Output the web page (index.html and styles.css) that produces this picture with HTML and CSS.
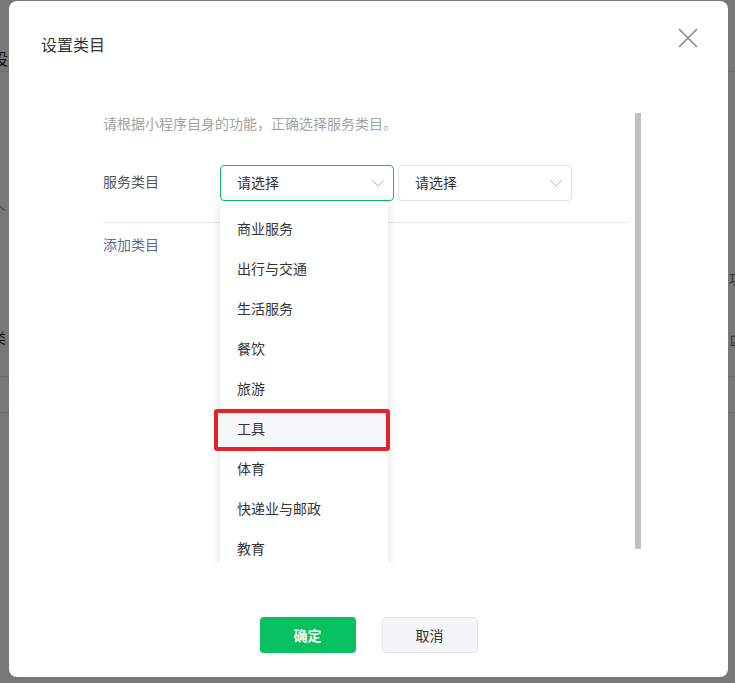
FILE: index.html
```html
<!DOCTYPE html>
<html lang="zh-CN">
<head>
<meta charset="utf-8">
<title>设置类目</title>
<link rel="stylesheet" href="styles.css">
</head>
<body>
<div class="page">
  <div class="bg-head"><span class="bg-title">设置</span></div>
  <div class="bg-row">
    <div class="bg-left">
      <div class="bg-t1">个</div>
      <div class="bg-t2">类</div>
    </div>
    <div class="bg-right">
      <div class="bg-t3">功</div>
      <div class="bg-t4">☑</div>
    </div>
  </div>
  <div class="bg-row2"></div>
</div>

<div class="mask">
  <div class="dialog">
    <div class="dialog-head">
      <h2 class="dialog-title">设置类目</h2>
      <button class="close" aria-label="关闭">
        <svg width="20" height="20" viewBox="0 0 20 20"><path d="M1 1 L19 19 M19 1 L1 19" stroke="#8a8a8a" stroke-width="1.6" fill="none"/></svg>
      </button>
    </div>

    <div class="scroll">
      <div class="content">
        <p class="hint">请根据小程序自身的功能，正确选择服务类目。</p>
        <div class="form-row">
          <label class="label">服务类目</label>
          <div class="select select-active">
            <span>请选择</span>
            <svg class="arrow" width="12" height="7" viewBox="0 0 12 7"><polyline points="0.5,0.5 6,6 11.5,0.5" fill="none" stroke="#b5b5b5" stroke-width="1"/></svg>
            <ul class="dropdown">
              <li>商业服务</li>
              <li>出行与交通</li>
              <li>生活服务</li>
              <li>餐饮</li>
              <li>旅游</li>
              <li class="hover">工具</li>
              <li>体育</li>
              <li>快递业与邮政</li>
              <li>教育</li>
              <li>医疗</li>
            </ul>
            <div class="mark"></div>
          </div>
          <div class="select">
            <span>请选择</span>
            <svg class="arrow" width="12" height="7" viewBox="0 0 12 7"><polyline points="0.5,0.5 6,6 11.5,0.5" fill="none" stroke="#b5b5b5" stroke-width="1"/></svg>
          </div>
        </div>
        <a class="add">添加类目</a>
      </div>
      <div class="track"><div class="thumb"></div></div>
    </div>

    <div class="footer">
      <button class="btn btn-primary">确定</button>
      <button class="btn btn-default">取消</button>
    </div>
  </div>
</div>
</body>
</html>
```

FILE: styles.css
```css
* { box-sizing: border-box; }
html, body { margin: 0; padding: 0; }
body {
  width: 735px;
  height: 683px;
  overflow: hidden;
  font-family: "Noto Sans CJK SC", "Noto Sans", sans-serif;
  font-size: 14px;
  color: #333;
  background: #fff;
}

/* background page under the mask */
.page { width: 735px; height: 683px; background: #fff; }
.bg-head {
  height: 72px;
  padding-top: 46px;
  border-bottom: 1px solid #dcdcdc;
}
.bg-title { display: block; margin-left: -8px; font-size: 16px; line-height: 24px; color: #222; }
.bg-row {
  height: 305px;
  display: flex;
  justify-content: space-between;
  border-bottom: 1px solid #dcdcdc;
}
.bg-left { margin-left: -8px; }
.bg-t1 { margin-top: 128px; color: #999; font-size: 14px; line-height: 20px; }
.bg-t2 { margin-top: 107px; color: #222; font-size: 14px; line-height: 20px; }
.bg-right { margin-right: -8px; text-align: right; }
.bg-t3 { margin-top: 196px; color: #666; font-size: 14px; line-height: 20px; }
.bg-t4 { margin-top: 42px; color: #222; font-size: 14px; line-height: 20px; }
.bg-row2 { height: 36px; border-bottom: 1px solid #dcdcdc; }

/* mask + dialog */
.mask {
  position: fixed;
  inset: 0;
  background: rgba(0, 0, 0, 0.53);
}
.dialog {
  position: absolute;
  left: 9px;
  top: 1px;
  width: 719px;
  height: 676px;
  background: #fff;
  border-radius: 8px;
}
.dialog-head { height: 112px; padding: 32px 0 0 32px; }
.dialog-title {
  margin: 0;
  font-size: 16px;
  font-weight: normal;
  line-height: 22px;
  color: #353535;
}
.close {
  position: absolute;
  left: 669px;
  top: 27px;
  width: 20px;
  height: 20px;
  padding: 0;
  border: 0;
  background: none;
}
.close svg { display: block; }

.scroll {
  margin-left: 94px;
  width: 538px;
  height: 449px;
  overflow: hidden;
  display: flex;
}
.content { width: 526px; flex: none; }
.track { margin-left: 6px; width: 6px; flex: none; }
.thumb { width: 6px; height: 436px; background: #c1c1c1; }

.hint {
  margin: 0;
  padding-top: 0;
  line-height: 20px;
  color: #a3a3a3;
}
.form-row {
  margin-top: 32px;
  display: flex;
  align-items: center;
  padding-bottom: 21px;
  border-bottom: 1px solid #e7e7e7;
}
.label { width: 117px; flex: none; color: #555; line-height: 20px; margin-top: -4px; }
.select {
  position: relative;
  width: 174px;
  height: 36px;
  flex: none;
  border: 1px solid #e2e2e2;
  border-radius: 4px;
  padding-left: 16px;
  padding-bottom: 2px;
  display: flex;
  align-items: center;
  color: #333;
}
.select + .select { margin-left: 4px; }
.select-active { width: 174px; border-color: #07c160; }
.arrow { position: absolute; right: 9px; top: 14px; }

.dropdown {
  position: absolute;
  left: -1px;
  top: 35px;
  width: 168px;
  margin: 0;
  padding: 7px 0 0;
  list-style: none;
  background: #fff;
  box-shadow: 0 2px 10px rgba(0, 0, 0, 0.12);
  z-index: 2;
}
.dropdown li {
  height: 40px;
  line-height: 40px;
  padding-left: 17px;
  color: #353535;
}
.dropdown li.hover { background: #f5f6f7; }
.mark {
  position: absolute;
  left: -7px;
  top: 243px;
  width: 176px;
  height: 42px;
  border: 4px solid #e8202c;
  border-radius: 3px;
  z-index: 3;
}

.add {
  display: block;
  margin-top: 11px;
  line-height: 20px;
  color: #576b95;
}

.footer {
  margin-top: 55px;
  display: flex;
  justify-content: center;
  gap: 26px;
}
.btn {
  width: 96px;
  height: 36px;
  border-radius: 4px;
  font-family: inherit;
  font-size: 14px;
  padding: 0 0 1px;
}
.btn-primary {
  background: #07c160;
  border: 0;
  color: #fff;
  font-weight: bold;
}
.btn-default {
  background: #f4f5f6;
  border: 1px solid #e1e2e4;
  color: #333;
}
```
